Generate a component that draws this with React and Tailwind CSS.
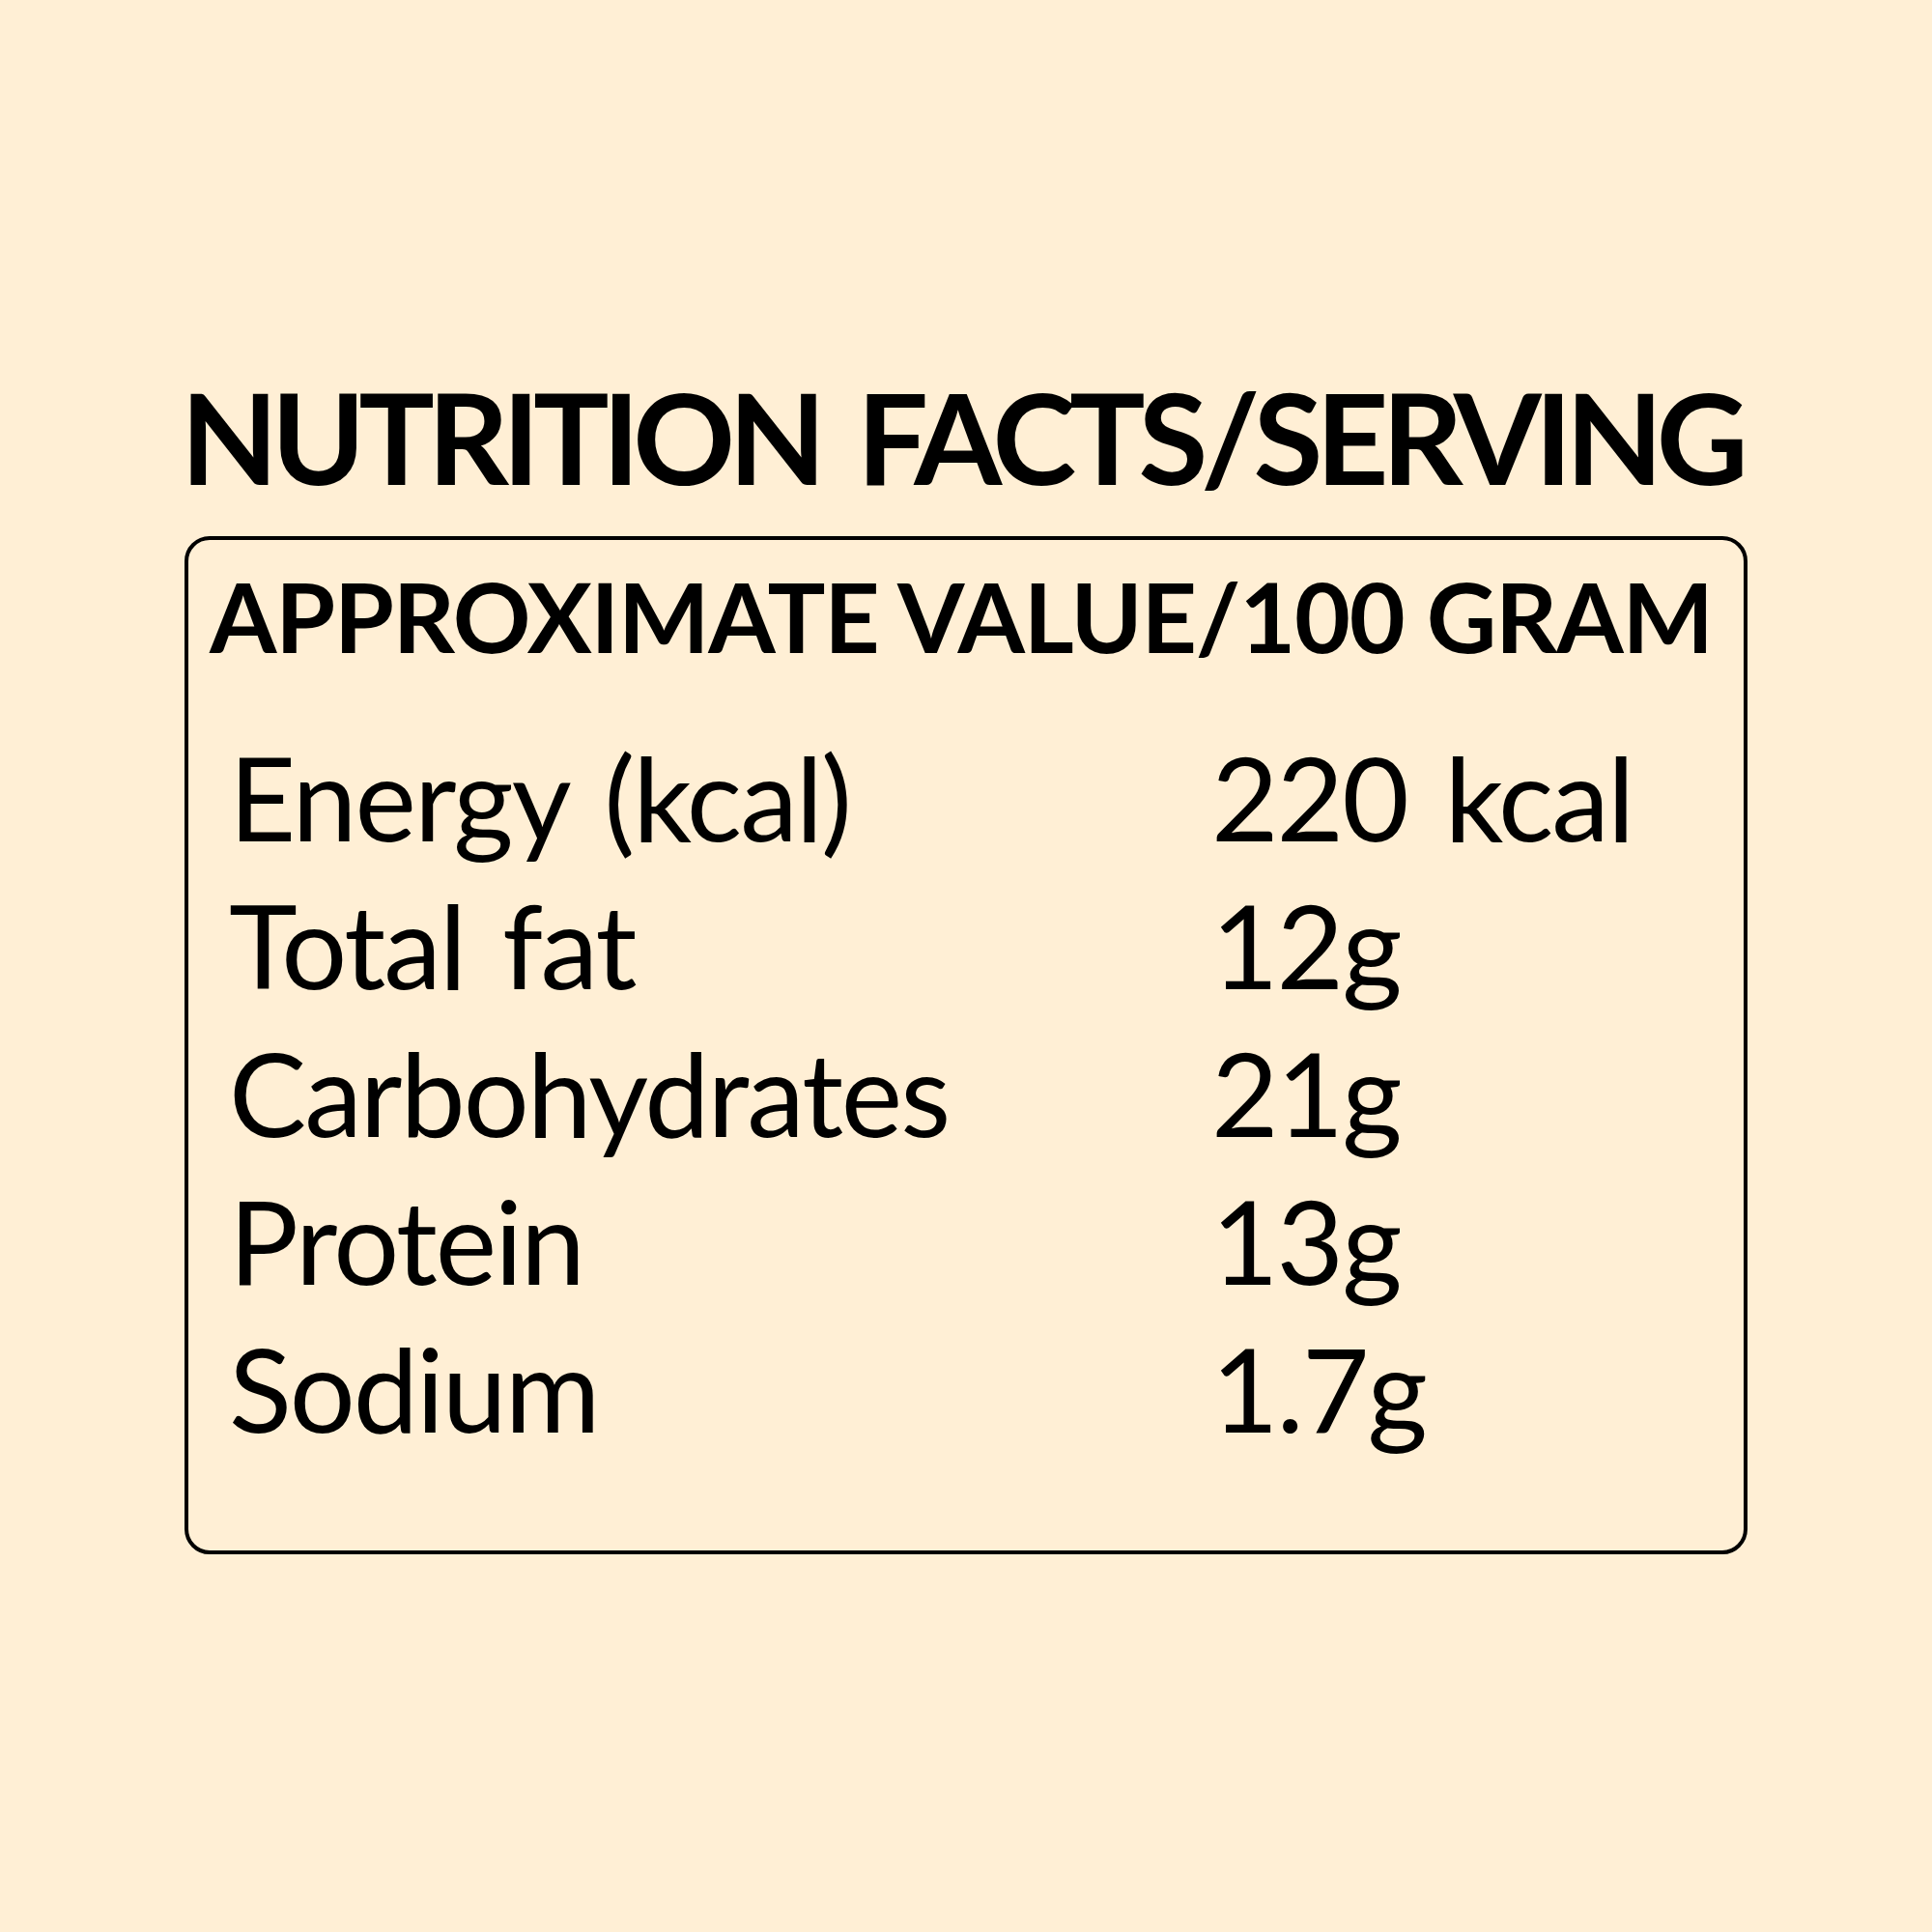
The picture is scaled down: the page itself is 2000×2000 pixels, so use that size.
const rows = [
  { label: "Energy (kcal)", value: "220 kcal" },
  { label: "Total fat", value: "12g" },
  { label: "Carbohydrates", value: "21g" },
  { label: "Protein", value: "13g" },
  { label: "Sodium", value: "1.7g" },
]

export default function App() {
  return (
    <div className="w-[2000px] h-[2000px] bg-[#ffefd5] text-black font-['Lato','Open_Sans',sans-serif]">
      <div className="pt-[386px] pl-[187px]">
        <h1 className="text-[131px] font-bold leading-none tracking-[-7px] [word-spacing:14px] whitespace-nowrap">
          NUTRITION FACTS/SERVING
        </h1>
      </div>

      <div className="ml-[191px] mt-[38px] w-[1618px] h-[1054px] border-[4px] border-black rounded-[26px]">
        <div className="pt-[28px] pl-[22px]">
          <h2 className="text-[100px] font-bold leading-none tracking-[-1.2px] whitespace-nowrap">
            APPROXIMATE VALUE/100 GRAM
          </h2>
        </div>

        <div className="mt-[62px] pl-[42px]">
          {rows.map((row) => (
            <div key={row.label} className="flex text-[120px] leading-[153px] tracking-[-2px] [word-spacing:10px] whitespace-nowrap">
              <span className="w-[1017px]">{row.label}</span>
              <span>{row.value}</span>
            </div>
          ))}
        </div>
      </div>
    </div>
  )
}
